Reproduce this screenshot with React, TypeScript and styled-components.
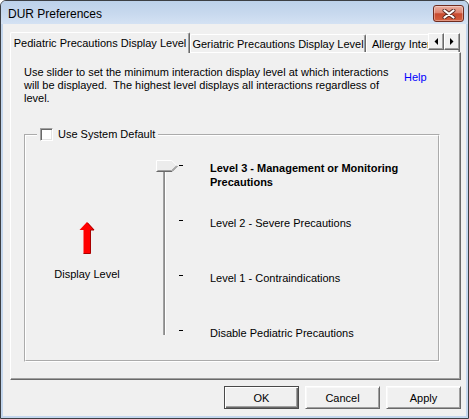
import React from "react";
import styled, { createGlobalStyle } from "styled-components";

const GlobalStyle = createGlobalStyle`
  html, body { margin: 0; padding: 0; background: #ffffff; }
  body {
    font-family: "Liberation Sans", Arial, sans-serif;
    font-size: 11px;
    color: #000;
  }
  * { box-sizing: border-box; }
`;

const Window = styled.div`
  width: 469px;
  height: 419px;
  border: 1px solid #3c3f44;
  border-radius: 6px 6px 0 0;
  background: #c3d6ed;
  display: flex;
  flex-direction: column;
  overflow: hidden;
`;

const TitleBar = styled.div`
  height: 23px;
  flex: none;
  display: flex;
  align-items: flex-start;
  justify-content: space-between;
  padding: 0 4px 0 7px;
  background: linear-gradient(#bcd1ea, #c8d9ee 55%, #d4e2f3);
`;

const TitleText = styled.span`
  font-family: "Segoe UI", "Liberation Sans", Arial, sans-serif;
  font-size: 12px;
  line-height: 16px;
  margin-top: 5px;
  color: #000;
`;

const CloseButton = styled.button`
  width: 31px;
  height: 17px;
  margin-top: 4px;
  padding: 0;
  border: 1px solid #6f2c20;
  border-radius: 3px;
  background: linear-gradient(#eab0a2 0%, #de8470 45%, #c84a2f 52%, #d5603f 100%);
  box-shadow: inset 0 0 0 1px rgba(255, 255, 255, 0.35);
  display: flex;
  align-items: center;
  justify-content: center;
`;

const Frame = styled.div`
  flex: 1;
  min-height: 0;
  display: flex;
  padding: 0 2px 2px 2px;
`;

const Body = styled.div`
  flex: 1;
  min-width: 0;
  overflow: hidden;
  background: #f0f0f0;
  display: flex;
  flex-direction: column;
  padding: 8px 5px 7px 7px;
`;

const TabStrip = styled.div`
  position: relative;
  height: 21px;
  flex: none;
  min-width: 0;
  display: flex;
  align-items: flex-end;
  margin-bottom: -1px;
  z-index: 1;
  overflow: hidden;
`;

const Tab = styled.div<{ $active?: boolean; $width: number; $clip?: boolean }>`
  flex: none;
  width: ${(p) => p.$width}px;
  height: ${(p) => (p.$active ? 21 : 18)}px;
  margin-bottom: ${(p) => (p.$active ? 0 : 1)}px;
  padding-top: ${(p) => (p.$active ? 4 : 3)}px;
  padding-left: ${(p) => (p.$clip ? 5 : 0)}px;
  text-align: ${(p) => (p.$clip ? "left" : "center")};
  line-height: 13px;
  white-space: nowrap;
  overflow: hidden;
  background: #f0f0f0;
  border-top: 1px solid #ffffff;
  border-left: 1px solid #ffffff;
  border-right: 1px solid #696969;
  border-radius: 2px 2px 0 0;
  box-shadow: inset -1px 0 0 #a0a0a0;
`;

const TabScroller = styled.div`
  position: absolute;
  right: 1px;
  top: 1px;
  display: flex;
`;

const ScrollButton = styled.div`
  width: 16px;
  height: 17px;
  background: #f0f0f0;
  border-top: 1px solid #ffffff;
  border-left: 1px solid #ffffff;
  border-right: 1px solid #696969;
  border-bottom: 1px solid #696969;
  box-shadow: inset -1px -1px 0 #a0a0a0;
  display: flex;
  align-items: center;
  justify-content: center;
`;

const Panel = styled.div`
  height: 328px;
  flex: none;
  border-top: 1px solid #ffffff;
  border-left: 1px solid #ffffff;
  border-right: 1px solid #696969;
  border-bottom: 1px solid #696969;
  box-shadow: inset -1px -1px 0 #a0a0a0;
  padding: 13px 20px 0 13px;
`;

const DescRow = styled.div`
  display: flex;
  align-items: flex-start;
`;

const DescText = styled.div`
  flex: 0 0 380px;
  line-height: 13px;
  white-space: pre;
`;

const HelpLink = styled.span`
  margin-top: 5px;
  color: #0000ff;
  line-height: 13px;
  cursor: pointer;
`;

const GroupBox = styled.fieldset`
  margin: 23px 0 0 0;
  padding: 0;
  width: 416px;
  height: 234px;
  min-width: 0;
  border: 2px groove #ffffff;
`;

const Legend = styled.legend`
  margin-left: 11px;
  padding: 0 3px;
  height: 13px;
  display: flex;
  align-items: center;
  gap: 5px;
  line-height: 13px;
`;

const CheckBox = styled.span`
  width: 13px;
  height: 13px;
  flex: none;
  background: #ffffff;
  border-top: 1px solid #a0a0a0;
  border-left: 1px solid #a0a0a0;
  border-right: 1px solid #ffffff;
  border-bottom: 1px solid #ffffff;
  box-shadow: inset 1px 1px 0 #696969, inset -1px -1px 0 #e3e3e3;
`;

const LevelGrid = styled.div`
  display: grid;
  grid-template-columns: 122px 30px 1fr;
  grid-template-rows: 55px 55px 55px auto;
  padding-top: 17px;
`;

const LeftCell = styled.div`
  grid-column: 1;
  grid-row: 1 / 5;
  display: flex;
  flex-direction: column;
  align-items: center;
  padding-top: 64px;
`;

const DisplayLabel = styled.div`
  margin-top: 14px;
  line-height: 13px;
`;

const SliderCell = styled.div`
  grid-column: 2;
  grid-row: 1 / 5;
  position: relative;
`;

const Track = styled.div`
  margin: 7px 0 0 15px;
  width: 3px;
  height: 170px;
  background: linear-gradient(to right, #a0a0a0 0 1px, #8a8a8a 1px 2px, #ffffff 2px 3px);
`;

const Thumb = styled.svg`
  position: absolute;
  left: 8px;
  top: 2px;
`;

const LevelRow = styled.div`
  grid-column: 3;
  display: flex;
  align-items: flex-start;
`;

const Tick = styled.span`
  flex: none;
  width: 4px;
  height: 1px;
  margin: 7px 0 0 1px;
  background: #000;
`;

const LevelLabel = styled.div<{ $bold?: boolean }>`
  margin: 3px 0 0 27px;
  width: 220px;
  line-height: 14px;
  font-weight: ${(p) => (p.$bold ? 700 : 400)};
`;

const ButtonRow = styled.div`
  display: flex;
  justify-content: flex-end;
  gap: 6px;
  margin-top: 6px;
`;

const DialogButton = styled.button<{ $default?: boolean }>`
  width: 75px;
  height: 23px;
  flex: none;
  padding: 0;
  font-family: "Liberation Sans", Arial, sans-serif;
  font-size: 11px;
  color: #000;
  background: #f0f0f0;
  border: 1px solid ${(p) => (p.$default ? "#4a4a4a" : "#ffffff")};
  border-right-color: ${(p) => (p.$default ? "#4a4a4a" : "#696969")};
  border-bottom-color: ${(p) => (p.$default ? "#4a4a4a" : "#696969")};
  box-shadow: ${(p) =>
    p.$default
      ? "inset 1px 1px 0 #ffffff, inset -1px -1px 0 #696969, inset -2px -2px 0 #a0a0a0"
      : "inset 1px 1px 0 #f8f8f8, inset -1px -1px 0 #a0a0a0"};
`;

const CloseIcon = () => (
  <svg width="14" height="10" viewBox="0 0 14 10">
    <path d="M2.5 1.5 L11.5 8.5 M11.5 1.5 L2.5 8.5" stroke="#5a2a22" strokeWidth="4" strokeLinecap="round" />
    <path d="M2.5 1.5 L11.5 8.5 M11.5 1.5 L2.5 8.5" stroke="#ffffff" strokeWidth="2.2" strokeLinecap="round" />
  </svg>
);

const RedArrow = () => (
  <svg width="16" height="32" viewBox="0 0 16 32">
    <polygon points="8,0 15.5,8 11.5,8 11.5,31.5 4.5,31.5 4.5,8 0.5,8" fill="#ff0000" />
    <polyline points="8.5,0.8 15,8 11.5,8 11.5,31.5 4.5,31.5" fill="none" stroke="#a80000" strokeWidth="1" />
  </svg>
);

const levels = [
  { label: "Level 3 - Management or Monitoring Precautions", bold: true },
  { label: "Level 2 - Severe Precautions" },
  { label: "Level 1 - Contraindications" },
  { label: "Disable Pediatric Precautions" },
];

export default function App() {
  return (
    <>
      <GlobalStyle />
      <Window>
        <TitleBar>
          <TitleText>DUR Preferences</TitleText>
          <CloseButton aria-label="Close">
            <CloseIcon />
          </CloseButton>
        </TitleBar>
        <Frame>
          <Body>
            <TabStrip>
              <Tab $active $width={180}>Pediatric Precautions Display Level</Tab>
              <Tab $width={176}>Geriatric Precautions Display Level</Tab>
              <Tab $width={94} $clip>Allergy Inter</Tab>
              <TabScroller>
                <ScrollButton>
                  <svg width="4" height="7" viewBox="0 0 4 7">
                    <polygon points="4,0 4,7 0.5,3.5" fill="#000" />
                  </svg>
                </ScrollButton>
                <ScrollButton>
                  <svg width="4" height="7" viewBox="0 0 4 7">
                    <polygon points="0,0 0,7 3.5,3.5" fill="#000" />
                  </svg>
                </ScrollButton>
              </TabScroller>
            </TabStrip>
            <Panel>
              <DescRow>
                <DescText>
                  {"Use slider to set the minimum interaction display level at which interactions\nwill be displayed.  The highest level displays all interactions regardless of\nlevel."}
                </DescText>
                <HelpLink>Help</HelpLink>
              </DescRow>
              <GroupBox>
                <Legend>
                  <CheckBox />
                  <span>Use System Default</span>
                </Legend>
                <LevelGrid>
                  <LeftCell>
                    <RedArrow />
                    <DisplayLabel>Display Level</DisplayLabel>
                  </LeftCell>
                  <SliderCell>
                    <Track />
                    <Thumb width="22" height="12" viewBox="0 0 22 12">
                      <polygon points="0,0 16,0 22,6 16,12 0,12" fill="#ececec" />
                      <polyline points="0.5,11 0.5,0.5 15.8,0.5 21,5.7" fill="none" stroke="#ffffff" />
                      <polyline points="0.5,11.5 16,11.5 21.5,6" fill="none" stroke="#696969" />
                      <polyline points="1.5,10.5 15.6,10.5 20.4,5.9" fill="none" stroke="#a0a0a0" />
                    </Thumb>
                  </SliderCell>
                  {levels.map((l) => (
                    <LevelRow key={l.label}>
                      <Tick />
                      <LevelLabel $bold={l.bold}>{l.label}</LevelLabel>
                    </LevelRow>
                  ))}
                </LevelGrid>
              </GroupBox>
            </Panel>
            <ButtonRow>
              <DialogButton $default>OK</DialogButton>
              <DialogButton>Cancel</DialogButton>
              <DialogButton>Apply</DialogButton>
            </ButtonRow>
          </Body>
        </Frame>
      </Window>
    </>
  );
}
